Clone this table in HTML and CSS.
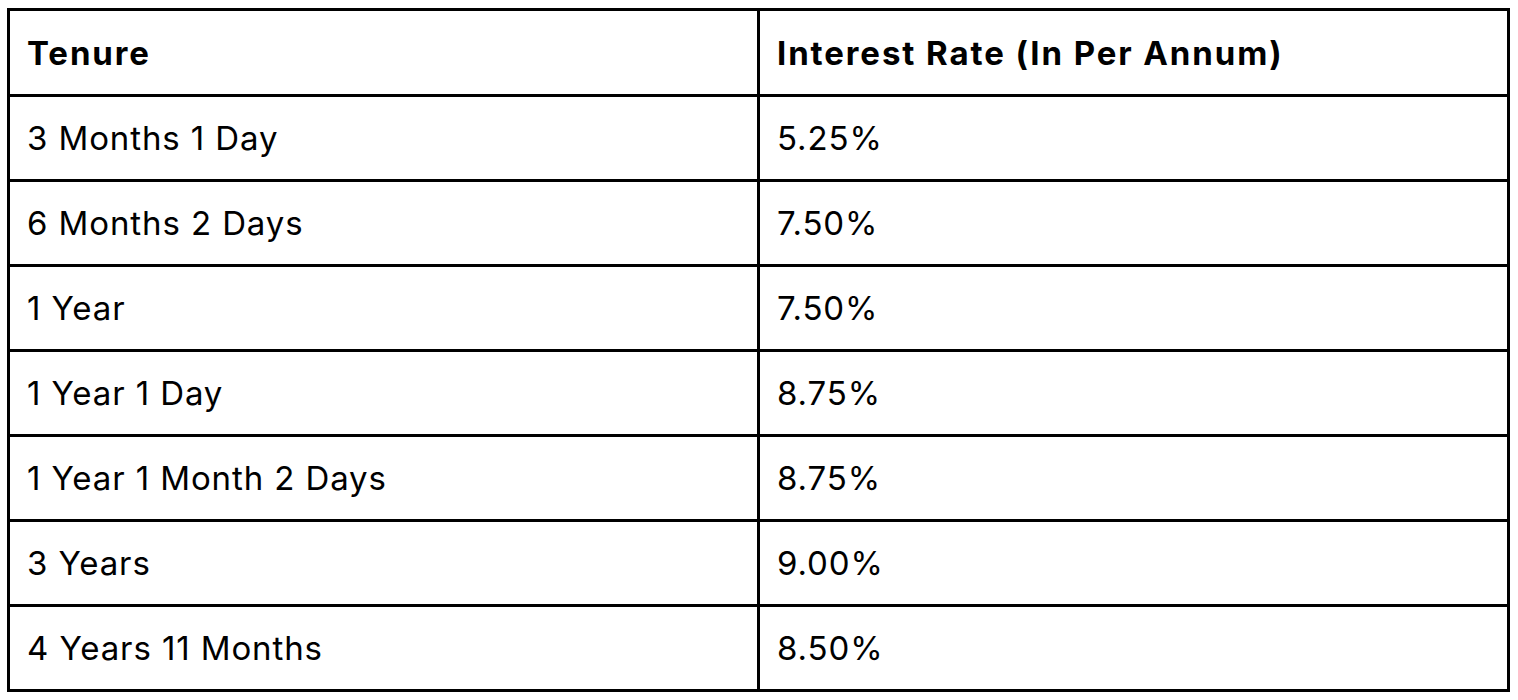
FILE: index.html
```html
<!DOCTYPE html>
<html lang="en">
<head>
<meta charset="utf-8">
<title>Interest Rates</title>
<link rel="stylesheet" href="styles.css">
</head>
<body>
<table class="rates">
  <thead>
    <tr><th>Tenure</th><th>Interest Rate (In Per Annum)</th></tr>
  </thead>
  <tbody>
    <tr><td>3 Months 1 Day</td><td>5.25%</td></tr>
    <tr><td>6 Months 2 Days</td><td>7.50%</td></tr>
    <tr><td>1 Year</td><td>7.50%</td></tr>
    <tr><td>1 Year 1 Day</td><td>8.75%</td></tr>
    <tr><td>1 Year 1 Month 2 Days</td><td>8.75%</td></tr>
    <tr><td>3 Years</td><td>9.00%</td></tr>
    <tr><td>4 Years 11 Months</td><td>8.50%</td></tr>
  </tbody>
</table>
</body>
</html>
```

FILE: styles.css
```css
html, body {
  margin: 0;
  background: #fff;
}
body {
  padding: 8px 0 0 7px;
  font-family: Inter, "Noto Sans", sans-serif;
  color: #000;
}
.rates {
  border-collapse: separate;
  border-spacing: 0;
  width: 1503px;
  table-layout: fixed;
  border-top: 3px solid #000;
  border-left: 3px solid #000;
}
.rates th,
.rates td {
  border-right: 3px solid #000;
  border-bottom: 3px solid #000;
  padding: 0 0 0 17px;
  text-align: left;
  vertical-align: middle;
  font-size: 33px;
  line-height: 38px;
  height: 85px;
  box-sizing: border-box;
}
.rates th {
  height: 86px;
  font-weight: 700;
  letter-spacing: 1.9px;
}
.rates td {
  font-weight: 400;
  letter-spacing: 0.9px;
}
```
